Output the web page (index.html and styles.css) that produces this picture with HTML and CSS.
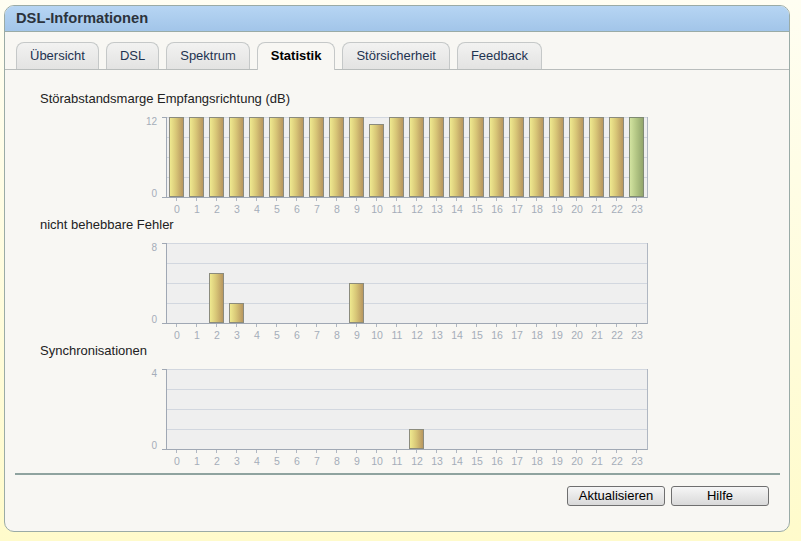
FILE: index.html
```html
<!DOCTYPE html>
<html lang="de">
<head>
  <meta charset="UTF-8">
  <meta name="viewport" content="width=device-width, initial-scale=1.0">
  <title>DSL-Informationen</title>
  <link rel="stylesheet" href="styles.css">
</head>
<body>
  <div class="panel">
    <div class="panel-head">DSL-Informationen</div>

    <ul class="tabs">
      <li>Übersicht</li>
      <li>DSL</li>
      <li>Spektrum</li>
      <li class="active">Statistik</li>
      <li>Störsicherheit</li>
      <li>Feedback</li>
    </ul>

    <div class="content">
      <!-- data-values: ein Wert pro Stunde 0..23 -->
      <div class="chart" data-max="12" data-values="12,12,12,12,12,12,12,12,12,12,11,12,12,12,12,12,12,12,12,12,12,12,12,12">
        <div class="chart-title">Störabstandsmarge Empfangsrichtung (dB)</div>
        <div class="chart-body">
          <div class="y-axis"><span>12</span><span>0</span></div>
          <div class="plot"></div>
        </div>
        <div class="x-axis"></div>
      </div>

      <div class="chart" data-max="8" data-values="0,0,5,2,0,0,0,0,0,4,0,0,0,0,0,0,0,0,0,0,0,0,0,0">
        <div class="chart-title">nicht behebbare Fehler</div>
        <div class="chart-body">
          <div class="y-axis"><span>8</span><span>0</span></div>
          <div class="plot"></div>
        </div>
        <div class="x-axis"></div>
      </div>

      <div class="chart" data-max="4" data-values="0,0,0,0,0,0,0,0,0,0,0,0,1,0,0,0,0,0,0,0,0,0,0,0">
        <div class="chart-title">Synchronisationen</div>
        <div class="chart-body">
          <div class="y-axis"><span>4</span><span>0</span></div>
          <div class="plot"></div>
        </div>
        <div class="x-axis"></div>
      </div>
    </div>

    <div class="separator"></div>
    <div class="buttons">
      <button>Aktualisieren</button>
      <button>Hilfe</button>
    </div>
  </div>

  <script>
    // Balken und Beschriftung fuer jedes Diagramm aus data-values bauen
    const PLOT_HEIGHT = 80
    const CURRENT_HOUR = 23

    document.querySelectorAll('.chart').forEach(chart => {
      const max = Number(chart.dataset.max)
      const values = chart.dataset.values.split(',').map(Number)
      const plot = chart.querySelector('.plot')
      const axis = chart.querySelector('.x-axis')

      values.forEach((value, hour) => {
        const slot = document.createElement('div')
        slot.className = 'slot'
        if (value > 0) {
          const bar = document.createElement('div')
          bar.className = hour === CURRENT_HOUR ? 'bar current' : 'bar'
          bar.style.height = Math.round(value / max * PLOT_HEIGHT) + 'px'
          slot.appendChild(bar)
        }
        plot.appendChild(slot)

        const label = document.createElement('span')
        label.textContent = hour
        axis.appendChild(label)
      })
    })
  </script>
</body>
</html>
```

FILE: styles.css
```css
* {
  box-sizing: border-box;
}

body {
  margin: 0;
  height: 541px;
  background: linear-gradient(#fffef2, #fffbcb);
  font-family: "Liberation Sans", Arial, sans-serif;
}

.panel {
  margin: 5px 0 0 4px;
  width: 786px;
  height: 527px;
  border: 1px solid #9aaba6;
  border-radius: 10px;
  background-color: #f8f7f3;
  overflow: hidden;
}

.panel-head {
  height: 26px;
  padding-left: 11px;
  border-bottom: 1px solid #9aaba6;
  background: linear-gradient(#b6d5f3, #a2c5e9);
  color: #2b333c;
  font-size: 14.7px;
  font-weight: bold;
  line-height: 25px;
}

.tabs {
  display: flex;
  align-items: flex-end;
  gap: 7px;
  margin: 10px 0 0;
  padding: 0 0 0 11px;
  list-style: none;
  border-bottom: 1px solid #b9bdbc;
}

.tabs li {
  height: 27px;
  padding: 0 13px;
  border: 1px solid #c5c8c8;
  border-bottom: none;
  border-radius: 8px 8px 0 0;
  background: linear-gradient(#f2f2f1, #e3e3e2);
  color: #1e3350;
  font-size: 13px;
  line-height: 26px;
}

.tabs li.active {
  height: 28px;
  margin-bottom: -1px;
  background: #f8f7f3;
  color: #000;
  font-weight: bold;
}

.content {
  padding: 21px 0 0 35px;
}

.chart {
  height: 126px;
}

.chart-title {
  height: 16px;
  margin-bottom: 10px;
  color: #222;
  font-size: 13px;
  line-height: 16px;
}

.chart-body {
  display: flex;
}

.y-axis {
  display: flex;
  flex-direction: column;
  justify-content: space-between;
  align-items: flex-end;
  width: 126px;
  height: 81px;
  padding-right: 9px;
  color: #a5adb9;
  font-size: 10px;
  line-height: 9px;
  background:
    linear-gradient(#a0a8b4, #a0a8b4) right top / 4px 1px no-repeat,
    linear-gradient(#a0a8b4, #a0a8b4) right bottom / 4px 1px no-repeat;
}

.plot {
  display: flex;
  align-items: flex-end;
  width: 482px;
  height: 81px;
  border-left: 1px solid #a0a8b4;
  border-right: 1px solid #b0b7c2;
  border-bottom: 1px solid #a0a8b4;
  background-color: #efefef;
  background-image: repeating-linear-gradient(#d2d7df 0 1px, transparent 1px 20px);
}

.slot {
  display: flex;
  align-items: flex-end;
  width: 20px;
  height: 80px;
}

.bar {
  width: 15px;
  margin-left: 2px;
  border: 1px solid #8b8b7d;
  background: linear-gradient(to right, #efe98f, #d9c878 45%, #b8965f);
}

.bar.current {
  border-color: #7f8a72;
  background: linear-gradient(to right, #d2e3a0, #b5c886 45%, #92a56c);
}

.x-axis {
  display: flex;
  width: 480px;
  height: 20px;
  margin-left: 127px;
  padding-top: 4px;
  color: #a5adb9;
  font-size: 10.5px;
  line-height: 14px;
  background: repeating-linear-gradient(to right, transparent 0 9px, #b0b7c2 9px 10px, transparent 10px 20px) left top / 480px 3px no-repeat;
}

.x-axis span {
  width: 20px;
  text-align: center;
}

.separator {
  height: 2px;
  margin: 4px 9px 0 10px;
  background-color: #8fa39f;
}

.buttons {
  display: flex;
  justify-content: flex-end;
  gap: 6px;
  padding: 11px 20px 0 0;
}

.buttons button {
  width: 98px;
  height: 20px;
  padding: 0;
  border: 1px solid #6f6f6f;
  border-radius: 3px;
  background: linear-gradient(#f6f6f6, #d9d9d9);
  color: #000;
  font-family: "Liberation Sans", Arial, sans-serif;
  font-size: 13px;
  line-height: 18px;
}
```
